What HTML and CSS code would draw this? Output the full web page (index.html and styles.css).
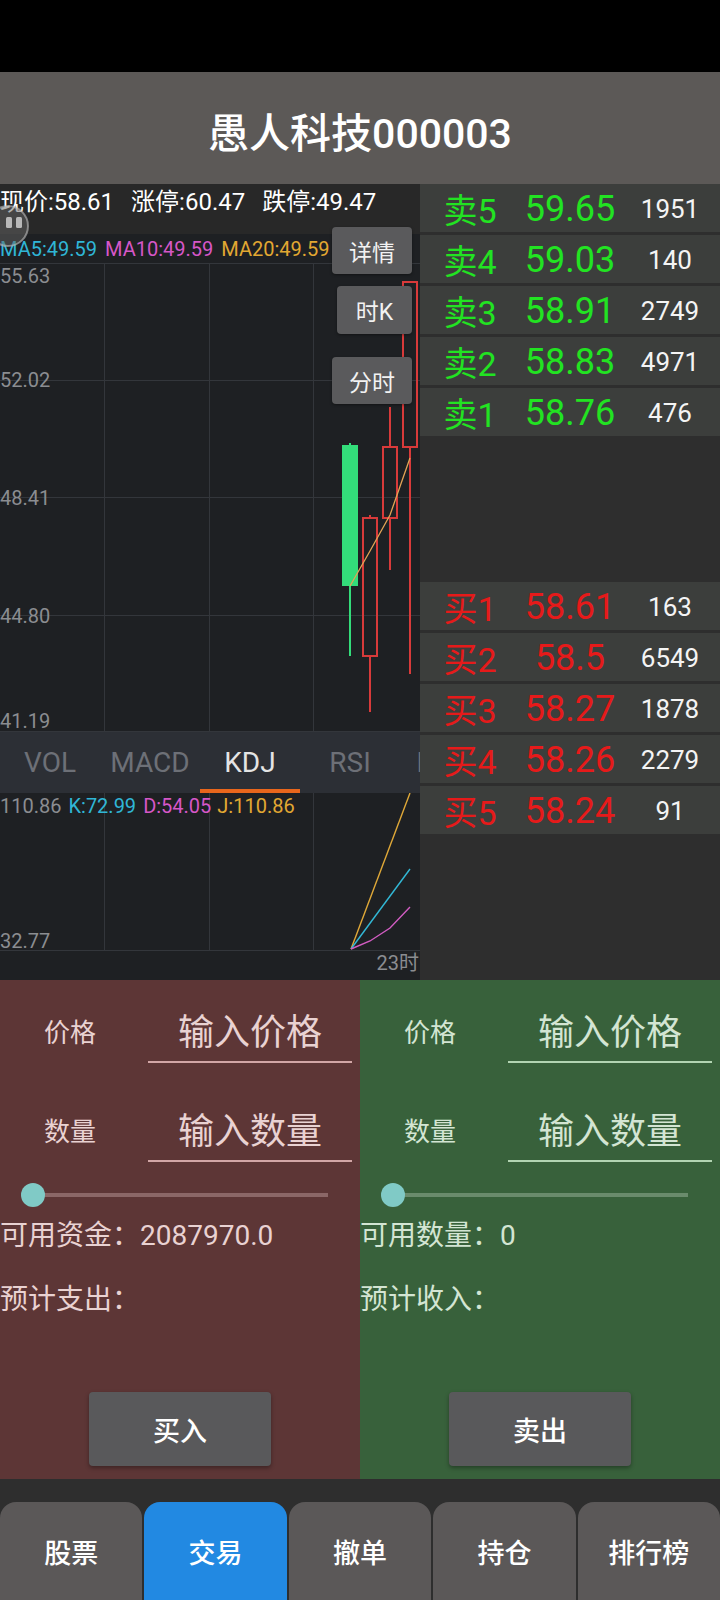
FILE: index.html
```html
<!DOCTYPE html>
<html lang="zh-CN">
<head>
    <meta charset="UTF-8">
    <meta name="viewport" content="width=device-width, initial-scale=1.0">
    <title>愚人科技 000003</title>
    <link rel="stylesheet" href="styles.css">
</head>
<body>
    <div class="status-bar"></div>
    <header class="title-bar">愚人科技000003</header>

    <div class="market">
        <div class="chart-panel">
            <div class="quote-line">
                <span>现价:58.61</span>
                <span>涨停:60.47</span>
                <span>跌停:49.47</span>
            </div>

            <div class="kline">
                <div class="ma-legend">
                    <span class="c-cyan">MA5:49.59</span>
                    <span class="c-pink">MA10:49.59</span>
                    <span class="c-orange">MA20:49.59</span>
                </div>
                <svg class="kline-svg" width="420" height="469" viewBox="0 0 420 469">
                    <g stroke="#33363b" stroke-width="1">
                        <line x1="0" y1="0.5" x2="420" y2="0.5"/>
                        <line x1="0" y1="117.5" x2="420" y2="117.5"/>
                        <line x1="0" y1="234.5" x2="420" y2="234.5"/>
                        <line x1="0" y1="352.5" x2="420" y2="352.5"/>
                        <line x1="0" y1="468.5" x2="420" y2="468.5"/>
                        <line x1="104.5" y1="0" x2="104.5" y2="469"/>
                        <line x1="209.5" y1="0" x2="209.5" y2="469"/>
                        <line x1="313.5" y1="0" x2="313.5" y2="469"/>
                    </g>
                    <g class="axis-text">
                        <text x="0" y="20">55.63</text>
                        <text x="0" y="124">52.02</text>
                        <text x="0" y="242">48.41</text>
                        <text x="0" y="360">44.80</text>
                        <text x="0" y="465">41.19</text>
                    </g>
                    <!-- candles -->
                    <line x1="350" y1="180" x2="350" y2="393" stroke="#33dd7a" stroke-width="2"/>
                    <rect x="342" y="182" width="16" height="141" fill="#33dd7a"/>
                    <g stroke="#d83a3a" stroke-width="2" fill="none">
                        <line x1="370" y1="252" x2="370" y2="255"/>
                        <line x1="370" y1="393" x2="370" y2="449"/>
                        <rect x="363" y="255" width="14" height="138"/>
                        <line x1="390" y1="144" x2="390" y2="184"/>
                        <line x1="390" y1="255" x2="390" y2="307"/>
                        <rect x="383" y="184" width="14" height="71"/>
                        <line x1="410" y1="184" x2="410" y2="411"/>
                        <rect x="403" y="19" width="14" height="165"/>
                    </g>
                    <polyline points="350,323 370,288 390,252 410,195" fill="none" stroke="#e2a456" stroke-width="1.3"/>
                </svg>
            </div>

            <div class="index-tabs">
                <div class="tab">VOL</div>
                <div class="tab">MACD</div>
                <div class="tab active">KDJ</div>
                <div class="tab">RSI</div>
                <div class="tab">BOLL</div>
            </div>

            <div class="sub-chart">
                <svg width="420" height="187" viewBox="0 0 420 187">
                    <g stroke="#33363b" stroke-width="1">
                        <line x1="0" y1="157.5" x2="420" y2="157.5"/>
                        <line x1="104.5" y1="0" x2="104.5" y2="157"/>
                        <line x1="209.5" y1="0" x2="209.5" y2="157"/>
                        <line x1="313.5" y1="0" x2="313.5" y2="157"/>
                    </g>
                    <text class="sub-legend" x="0" y="20"><tspan class="t-gray">110.86</tspan><tspan dx="7" class="t-cyan">K:72.99</tspan><tspan dx="7" class="t-pink">D:54.05</tspan><tspan dx="6" class="t-orange">J:110.86</tspan></text>
                    <text class="axis-text" x="0" y="155">32.77</text>
                    <text class="axis-text" x="419" y="177" text-anchor="end">23时</text>
                    <polyline points="351,156 410,0" fill="none" stroke="#e0a838" stroke-width="1.4"/>
                    <polyline points="351,156 410,76" fill="none" stroke="#32b8d6" stroke-width="1.4"/>
                    <polyline points="351,156 370,148 390,135 410,114" fill="none" stroke="#d25cc2" stroke-width="1.4"/>
                </svg>
            </div>

            <div class="chart-buttons">
                <div class="chart-btn btn-detail">详情</div>
                <div class="chart-btn btn-hour">时K</div>
                <div class="chart-btn btn-minute">分时</div>
            </div>

            <div class="float-ball">
                <svg width="44" height="44" viewBox="0 0 44 44">
                    <circle cx="22" cy="22" r="20" fill="rgba(100,100,100,0.5)" stroke="rgba(190,190,190,0.6)" stroke-width="2"/>
                    <rect x="20" y="13" width="6" height="11" rx="1.5" fill="rgba(205,205,205,0.85)"/>
                    <rect x="30" y="13" width="6" height="11" rx="1.5" fill="rgba(205,205,205,0.85)"/>
                </svg>
            </div>
        </div>

        <div class="book">
            <div class="book-group sell">
                <div class="book-row"><span class="lvl">卖5</span><span class="price">59.65</span><span class="vol">1951</span></div>
                <div class="book-row"><span class="lvl">卖4</span><span class="price">59.03</span><span class="vol">140</span></div>
                <div class="book-row"><span class="lvl">卖3</span><span class="price">58.91</span><span class="vol">2749</span></div>
                <div class="book-row"><span class="lvl">卖2</span><span class="price">58.83</span><span class="vol">4971</span></div>
                <div class="book-row"><span class="lvl">卖1</span><span class="price">58.76</span><span class="vol">476</span></div>
            </div>
            <div class="book-group buy">
                <div class="book-row"><span class="lvl">买1</span><span class="price">58.61</span><span class="vol">163</span></div>
                <div class="book-row"><span class="lvl">买2</span><span class="price">58.5</span><span class="vol">6549</span></div>
                <div class="book-row"><span class="lvl">买3</span><span class="price">58.27</span><span class="vol">1878</span></div>
                <div class="book-row"><span class="lvl">买4</span><span class="price">58.26</span><span class="vol">2279</span></div>
                <div class="book-row"><span class="lvl">买5</span><span class="price">58.24</span><span class="vol">91</span></div>
            </div>
        </div>
    </div>

    <div class="trade">
        <div class="trade-side trade-buy">
            <div class="field">
                <div class="field-label">价格</div>
                <div class="field-input">输入价格</div>
            </div>
            <div class="field">
                <div class="field-label">数量</div>
                <div class="field-input">输入数量</div>
            </div>
            <div class="slider"><div class="thumb"></div></div>
            <div class="info-line avail">可用资金：2087970.0</div>
            <div class="info-line estimate">预计支出：</div>
            <button class="trade-btn">买入</button>
        </div>
        <div class="trade-side trade-sell">
            <div class="field">
                <div class="field-label">价格</div>
                <div class="field-input">输入价格</div>
            </div>
            <div class="field">
                <div class="field-label">数量</div>
                <div class="field-input">输入数量</div>
            </div>
            <div class="slider"><div class="thumb"></div></div>
            <div class="info-line avail">可用数量：0</div>
            <div class="info-line estimate">预计收入：</div>
            <button class="trade-btn">卖出</button>
        </div>
    </div>

    <nav class="bottom-nav">
        <div class="nav-item">股票</div>
        <div class="nav-item active">交易</div>
        <div class="nav-item">撤单</div>
        <div class="nav-item">持仓</div>
        <div class="nav-item">排行榜</div>
    </nav>
</body>
</html>
```

FILE: styles.css
```css
* {
    margin: 0;
    padding: 0;
    box-sizing: border-box;
}

html, body {
    width: 720px;
    height: 1600px;
}

body {
    font-family: Roboto, "Noto Sans CJK SC", sans-serif;
    background-color: #2e2e2e;
    color: white;
    overflow: hidden;
}

.status-bar {
    height: 72px;
    background-color: black;
}

.title-bar {
    height: 112px;
    padding-top: 4px;
    background-color: #5c5957;
    display: flex;
    align-items: center;
    justify-content: center;
    font-size: 41px;
    font-weight: 500;
}

.market {
    display: flex;
    height: 796px;
}

.chart-panel {
    position: relative;
    width: 420px;
    display: flex;
    flex-direction: column;
    background-color: #1e2023;
    overflow: hidden;
}

.quote-line {
    height: 50px;
    background-color: #282828;
    display: flex;
    gap: 17px;
    font-size: 24px;
    line-height: 36px;
    white-space: nowrap;
}

.kline {
    height: 498px;
}

.ma-legend {
    height: 29px;
    padding-top: 2px;
    display: flex;
    gap: 8px;
    font-size: 20px;
    line-height: 27px;
    white-space: nowrap;
}

.c-cyan { color: #30b6d6; }
.c-pink { color: #d657c8; }
.c-orange { color: #e2a832; }

.kline-svg, .sub-chart svg {
    display: block;
}

.axis-text {
    fill: #8b8d91;
    font-size: 20px;
}

.sub-legend {
    font-size: 20px;
}

.t-gray { fill: #8b8d91; }
.t-cyan { fill: #30b6d6; }
.t-pink { fill: #d657c8; }
.t-orange { fill: #e2a832; }

.index-tabs {
    height: 61px;
    display: flex;
    background-color: #2c2f35;
    white-space: nowrap;
    overflow: hidden;
}

.tab {
    flex: 0 0 100px;
    text-align: center;
    font-size: 28px;
    line-height: 61px;
    color: #6d7077;
}

.tab.active {
    color: #e4e4e4;
    box-shadow: inset 0 -4px 0 #e8661c;
}

.sub-chart {
    flex: 1;
}

.chart-buttons {
    position: absolute;
    top: 43px;
    right: 8px;
    display: flex;
    flex-direction: column;
    align-items: flex-end;
}

.chart-btn {
    width: 80px;
    height: 47px;
    border-radius: 4px;
    background-color: #5a5a5c;
    color: #f2f2f2;
    font-size: 23px;
    display: flex;
    align-items: center;
    justify-content: center;
    box-shadow: 0 1px 3px rgba(0, 0, 0, 0.4);
}

.btn-hour {
    width: 75px;
    height: 48px;
    margin-top: 12px;
}

.btn-minute {
    margin-top: 23px;
}

.float-ball {
    position: absolute;
    top: 20px;
    left: -14px;
    width: 44px;
    height: 44px;
}

.float-ball svg {
    display: block;
}

.book {
    width: 300px;
    display: flex;
    flex-direction: column;
    gap: 146px;
    background-color: #2e2e2e;
}

.book-group {
    display: flex;
    flex-direction: column;
    gap: 3px;
}

.book-row {
    height: 48px;
    background-color: #3c3e3c;
    display: grid;
    grid-template-columns: repeat(3, 1fr);
    align-items: center;
    text-align: center;
    white-space: nowrap;
}

.lvl {
    font-size: 34px;
}

.price {
    font-size: 36px;
}

.vol {
    font-size: 26px;
    color: #f4f4f4;
}

.sell .book-row { color: #22e322; }
.buy .book-row { color: #e61a1a; }

.trade {
    display: flex;
    height: 499px;
}

.trade-side {
    width: 360px;
    padding-top: 26px;
}

.trade-buy {
    background-color: #5d3636;
    color: #e9d2d2;
    --line: #d2a6a6;
    --track: #8b6767;
}

.trade-sell {
    background-color: #38613b;
    color: #d3e5d3;
    --line: #b2d4b2;
    --track: #6a8b6c;
}

.field {
    display: flex;
    height: 57px;
}

.field + .field {
    margin-top: 42px;
}

.field-label {
    width: 140px;
    text-align: center;
    font-size: 26px;
    line-height: 55px;
}

.field-input {
    margin-left: 8px;
    width: 204px;
    border-bottom: 2px solid var(--line);
    text-align: center;
    font-size: 36px;
    line-height: 55px;
}

.slider {
    margin: 21px 0 0 21px;
    width: 307px;
    height: 24px;
    background: linear-gradient(var(--track), var(--track)) 12px 50% / 295px 4px no-repeat;
}

.thumb {
    width: 24px;
    height: 24px;
    border-radius: 50%;
    background-color: #80cac6;
}

.info-line {
    font-size: 28px;
    line-height: 40px;
    white-space: nowrap;
}

.avail {
    margin-top: 9px;
}

.estimate {
    margin-top: 24px;
}

.trade-btn {
    display: flex;
    margin: 72px auto 0;
    width: 182px;
    height: 74px;
    border: none;
    border-radius: 4px;
    background-color: #59595b;
    color: white;
    font-family: inherit;
    font-size: 27px;
    font-weight: 500;
    align-items: center;
    justify-content: center;
    box-shadow: 0 2px 4px rgba(0, 0, 0, 0.35);
}

.bottom-nav {
    height: 121px;
    padding-top: 23px;
    display: flex;
    gap: 2px;
    background-color: #2e2e2e;
}

.nav-item {
    flex: 1;
    border-radius: 16px 16px 0 0;
    background-color: #5b5858;
    display: flex;
    align-items: center;
    justify-content: center;
    font-size: 27px;
    font-weight: 500;
}

.nav-item.active {
    background-color: #2289e2;
}
```
